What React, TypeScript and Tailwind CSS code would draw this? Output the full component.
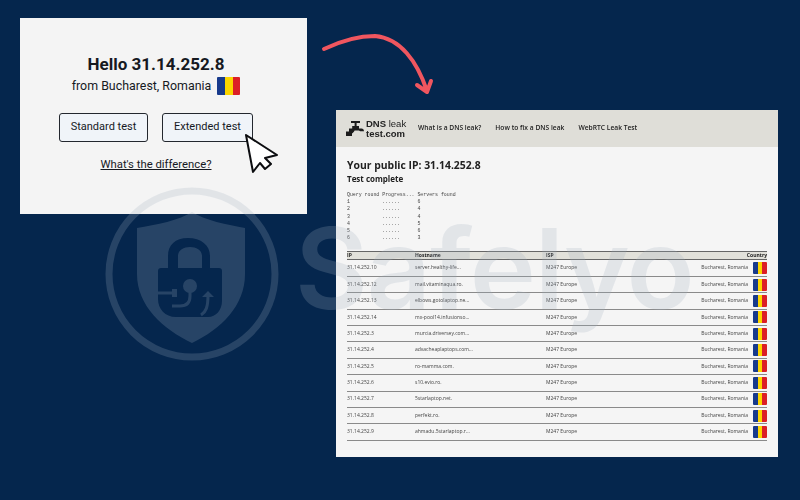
const rows = [
  ["31.14.252.10", "server.healthy-life..."],
  ["31.14.252.12", "mail.vitaminaqua.ro."],
  ["31.14.252.13", "elbows.gotolaptop.ne..."],
  ["31.14.252.14", "mx-pool14.infusionso..."],
  ["31.14.252.3", "murcia.driversey.com..."],
  ["31.14.252.4", "advacheaplaptops.com..."],
  ["31.14.252.5", "ro-mamma.com."],
  ["31.14.252.6", "s10.evio.ro."],
  ["31.14.252.7", "5starlaptop.net."],
  ["31.14.252.8", "perfekt.ro."],
  ["31.14.252.9", "ahmadu.5starlaptop.r..."],
];

const queries = `Query round Progress... Servers found
1           ......      6
2           ......      4
3           ......      4
4           ......      5
5           ......      6
6           ......      3`;

function Flag({ className }: { className: string }) {
  return (
    <span className={`flex shrink-0 overflow-hidden rounded-[1px] ${className}`}>
      <span className="flex-1 bg-[#173a8c]" />
      <span className="flex-1 bg-[#fbd500]" />
      <span className="flex-1 bg-[#dc1f26]" />
    </span>
  );
}

function HelloCard() {
  return (
    <div className="flex h-[196px] w-[287px] shrink-0 flex-col items-center bg-[#f4f4f4] pt-[34px] pr-[15px] font-['Roboto',sans-serif] text-[#16191f]">
      <h1 className="text-[17px] leading-[24px] font-bold">Hello 31.14.252.8</h1>
      <div className="flex items-center gap-[6px] text-[12.4px] leading-[20px]">
        <span>from Bucharest, Romania</span>
        <Flag className="h-[18px] w-[23px]" />
      </div>
      <div className="mt-[17px] flex gap-[14px] text-[11px]">
        <button className="h-[29px] w-[89px] rounded-[3px] border border-[#23272e] bg-[#f0f4f9]">
          Standard test
        </button>
        <button className="h-[29px] w-[91px] rounded-[3px] border border-[#23272e] bg-[#f0f4f9]">
          Extended test
        </button>
      </div>
      <a className="mt-[14px] text-[11.3px] leading-[17px] underline">What's the difference?</a>
    </div>
  );
}

function LeakCard() {
  return (
    <div className="mt-[92px] h-[347px] w-[442px] shrink-0 bg-[#f5f5f5] font-['Open_Sans',sans-serif] text-[#222] blur-[0.4px]">
      <header className="flex h-[37px] items-center bg-[#dfded8] pl-[10px]">
        <svg viewBox="0 0 18 18" className="h-[18px] w-[18px] text-[#1c1c1c]" fill="currentColor">
          <path d="M5 1h9v2h-3.4v3H13v2.4h2.5c1.5 0 2.5 1.2 2.5 2.8H14.2c-.6 0-1-.6-1.8-.6H8.6C8 12 7 13 6 13.4V16H0v-4.6h3V8.4h3.2V6h2.4V3H5z" />
        </svg>
        <div className="ml-[2px] w-[52px] font-['Liberation_Sans',sans-serif] text-[9.5px] leading-[10px] font-bold">
          DNS <span className="font-normal">leak</span>
          <br />
          test.com
        </div>
        <nav className="flex gap-[14px] text-[6.7px] font-semibold">
          <span>What is a DNS leak?</span>
          <span>How to fix a DNS leak</span>
          <span>WebRTC Leak Test</span>
        </nav>
      </header>
      <div className="px-[11px]">
        <h2 className="mt-[10px] text-[10.4px] leading-[16px] font-bold">Your public IP: 31.14.252.8</h2>
        <h3 className="text-[8px] leading-[11px] font-bold">Test complete</h3>
        <pre className="mt-[7px] font-['Liberation_Mono',monospace] text-[4.9px] leading-[7.2px] text-[#444]">{queries}</pre>
        <div className="mt-[10px] grid h-[9px] grid-cols-[68px_131px_1fr_auto] items-center border-y border-[#666] bg-[#e2e1da] text-[5px] font-bold">
          <span>IP</span>
          <span>Hostname</span>
          <span>ISP</span>
          <span>Country</span>
        </div>
        {rows.map(([ip, host]) => (
          <div
            key={ip}
            className="grid h-[16.4px] grid-cols-[68px_131px_1fr_auto] items-center border-b-[1.5px] border-[#8a8a8a] text-[5px] text-[#444]"
          >
            <span>{ip}</span>
            <span>{host}</span>
            <span>M247 Europe</span>
            <span className="flex items-center gap-[5px]">
              Bucharest, Romania
              <Flag className="h-[12px] w-[14px]" />
            </span>
          </div>
        ))}
      </div>
    </div>
  );
}

function Watermark() {
  return (
    <div className="pointer-events-none absolute top-[184px] left-[100px] flex items-center text-[#a0aebe] opacity-[0.22]">
      <svg viewBox="0 0 184 184" className="h-[184px] w-[184px]" fill="currentColor">
        <mask id="lock">
          <rect width="184" height="184" fill="white" />
          <path
            d="M68 84h-7c-2 0-3 1-3 3v28c0 10 7 18 18 18h32c8 0 14-7 14-16V87c0-2-1-3-3-3h-9V72c0-11-9-18-22-18S68 61 68 72zm10 0V72c0-6 6-9 12-9s12 3 12 9v12z"
            fill="black"
            fillRule="evenodd"
          />
          <circle cx="90" cy="102" r="7" fill="white" />
          <path
            d="M37 109h35M90 108v4c0 7-4 10-10 10h-8M101 131c5-3 7-8 7-20"
            stroke="white"
            strokeWidth="3"
            fill="none"
          />
          <path d="M72 105h5v8h-5zM102 113l6-6 6 6z" fill="white" />
        </mask>
        <circle cx="92" cy="90" r="83" fill="none" stroke="currentColor" strokeWidth="7" />
        <path
          mask="url(#lock)"
          d="M92 28c12 8 36 13 53 16v46c0 32-24 55-53 69-29-14-55-37-55-69V44c19-3 43-8 55-16z"
        />
      </svg>
      <span className="-mt-[16px] ml-[11px] font-['Inter',sans-serif] text-[112px] leading-none font-semibold tracking-[-0.01em]">
        Safelyo
      </span>
    </div>
  );
}

export default function App() {
  return (
    <div className="relative flex h-[500px] w-[800px] items-start gap-[29px] overflow-hidden bg-[#05264d] pt-[18px] pl-[20px]">
      <HelloCard />
      <LeakCard />
      <Watermark />
      <svg viewBox="0 0 800 500" className="pointer-events-none absolute inset-0 h-[500px] w-[800px]" fill="none">
        <path
          d="M324 49C345 39 362 36 375 36c25 2 42 25 52 55M417 85l10 7 4-11"
          stroke="#f0565f"
          strokeWidth="4"
          strokeLinecap="round"
          strokeLinejoin="round"
        />
        <path
          d="M246 135l31 20-12 3 6 6-6 5-5-6-7 9z"
          fill="#fff"
          stroke="#0c0d10"
          strokeWidth="2"
          strokeLinejoin="round"
        />
      </svg>
    </div>
  );
}
